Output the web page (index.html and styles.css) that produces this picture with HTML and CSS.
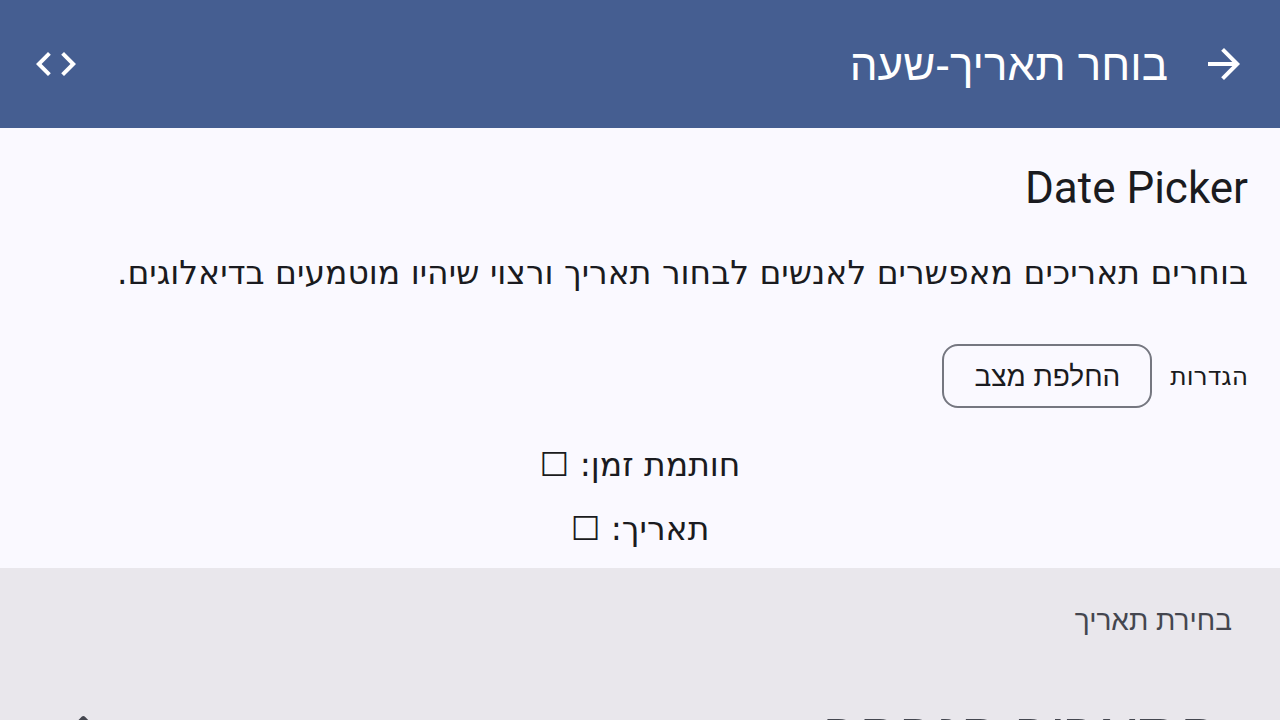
FILE: index.html
```html
<!DOCTYPE html>
<html lang="he" dir="rtl">
<head>
<meta charset="utf-8">
<meta name="viewport" content="width=device-width, initial-scale=1">
<title>בוחר תאריך-שעה</title>
<link rel="stylesheet" href="styles.css">
</head>
<body>
<header class="app-bar">
  <button class="icon-button" type="button" aria-label="חזרה">
    <svg class="icon" viewBox="0 0 24 24" aria-hidden="true"><path d="M12 4l-1.41 1.41L16.17 11H4v2h12.17l-5.58 5.59L12 20l8-8z"/></svg>
  </button>
  <h1 class="app-title">בוחר תאריך-שעה</h1>
  <button class="icon-button" type="button" aria-label="קוד מקור">
    <svg class="icon" viewBox="0 0 24 24" aria-hidden="true"><path d="M9.4 16.6L4.8 12l4.6-4.6L8 6l-6 6 6 6 1.4-1.4zm5.2 0l4.6-4.6-4.6-4.6L16 6l6 6-6 6-1.4-1.4z"/></svg>
  </button>
</header>
<main class="content">
  <section class="intro">
    <h2 class="heading">Date Picker</h2>
    <p class="body-text">בוחרים תאריכים מאפשרים לאנשים לבחור תאריך ורצוי שיהיו מוטמעים בדיאלוגים.</p>
    <div class="settings">
      <span class="settings-label">הגדרות</span>
      <button class="chip" type="button">החלפת מצב</button>
    </div>
    <p class="result">חותמת זמן: <span class="empty-box">☐</span></p>
    <p class="result">תאריך: <span class="empty-box">☐</span></p>
  </section>
  <section class="picker">
    <p class="picker-title">בחירת תאריך</p>
    <div class="picker-head">
      <h3 class="picker-headline">התאריך הנבחר</h3>
      <button class="icon-button" type="button" aria-label="עריכה">
        <svg class="icon" viewBox="0 0 24 24" aria-hidden="true"><path d="M3 17.25V21h3.75L17.81 9.94l-3.75-3.75L3 17.25zM20.71 7.04c.39-.39.39-1.02 0-1.41l-2.34-2.34c-.39-.39-1.02-.39-1.41 0l-1.83 1.83 3.75 3.75 1.83-1.83z"/></svg>
      </button>
    </div>
  </section>
</main>
</body>
</html>
```
FILE: styles.css
```css
* {
  box-sizing: border-box;
}

body {
  margin: 0;
  height: 100vh;
  display: flex;
  flex-direction: column;
  overflow: hidden;
  background: #faf9ff;
  color: #1a1b20;
  font-family: Roboto, "Liberation Sans", sans-serif;
}

h1, h2, h3, p {
  margin: 0;
  font-weight: 400;
}

button {
  font: inherit;
  color: inherit;
}

.app-bar {
  flex: none;
  display: flex;
  align-items: center;
  height: 128px;
  padding: 0 8px;
  background: #455e91;
  color: #fff;
}

.icon-button {
  flex: none;
  display: grid;
  place-items: center;
  width: 96px;
  height: 96px;
  padding: 0;
  border: 0;
  background: none;
}

.icon {
  width: 48px;
  height: 48px;
  fill: currentColor;
}

.app-title {
  flex: 1;
  padding: 2px 8px 0;
  font-family: "Liberation Sans", sans-serif;
  font-size: 44px;
  line-height: 56px;
}

.content {
  flex: 1;
  min-height: 0;
  overflow: hidden;
}

.intro {
  padding: 32px 32px 8px;
}

.heading {
  font-size: 44px;
  line-height: 56px;
}

.body-text {
  margin-top: 32px;
  font-family: "DejaVu Sans", sans-serif;
  font-size: 33px;
  line-height: 50px;
}

.settings {
  display: flex;
  align-items: center;
  gap: 18px;
  margin: 46px 0 24px;
}

.settings-label {
  padding-top: 2px;
  font-family: "DejaVu Sans", sans-serif;
  font-size: 25px;
  line-height: 32px;
}

.chip {
  height: 64px;
  padding: 2px 30px 0;
  border: 2px solid #757780;
  border-radius: 16px;
  background: none;
  font-family: "Liberation Sans", sans-serif;
  font-size: 28px;
  line-height: 40px;
}

.result {
  padding: 8px 0 6px;
  font-family: "DejaVu Sans", sans-serif;
  font-size: 33px;
  line-height: 50px;
  text-align: center;
}

.picker {
  padding: 32px 48px 24px 24px;
  background: #e9e7ec;
  color: #44464f;
}

.picker-title {
  font-family: "Liberation Sans", sans-serif;
  font-size: 28px;
  line-height: 42px;
}

.picker-head {
  display: flex;
  align-items: center;
  justify-content: space-between;
  margin-top: 44px;
}

.picker-headline {
  padding: 2px 12px 0 0;
  font-family: "Liberation Sans", sans-serif;
  font-size: 62px;
  line-height: 80px;
}
```
